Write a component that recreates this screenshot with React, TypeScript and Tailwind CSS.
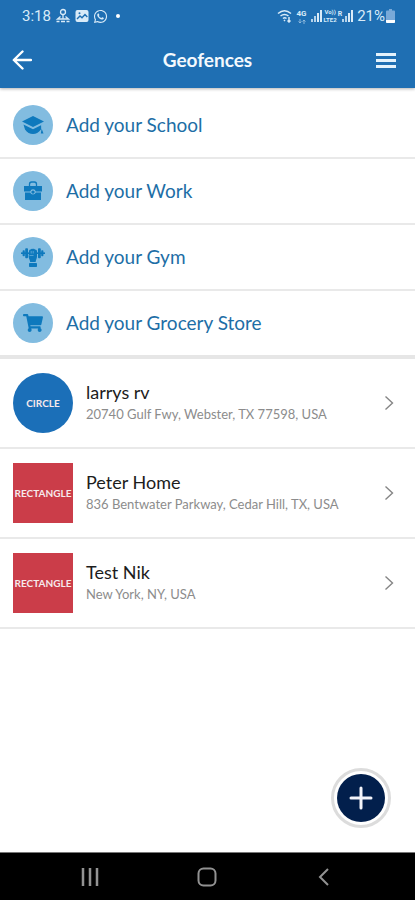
import type { ReactNode } from "react";
import { FaShoppingCart, FaWhatsapp } from "react-icons/fa";

const fontStack = "font-['Lato','Liberation_Sans',sans-serif]";

function SchoolIcon() {
  return (
    <svg viewBox="0 0 24 20" className="h-5 w-6" fill="#0e79bd" aria-hidden="true">
      <path d="M12 1 23 6.500 12 12 1 6.500z" />
      <path d="M2.500 9.500 12 14.200l8-4v4.300C17.500 17.500 15 19 12 19s-6-1.500-8-4.500z" />
      <path d="M20.800 8v6l1.700 4.500h-2.700l.8-4.500" />
    </svg>
  );
}

function WorkIcon() {
  return (
    <svg viewBox="0 0 20 20" className="size-5" fill="none" aria-hidden="true">
      <path d="M6.500 5V3.200C6.500 1.800 7.400 1 8.600 1h2.800c1.200 0 2.100.8 2.100 2.200V5" stroke="#0e79bd" strokeWidth="1.300" />
      <path d="M1 5h18v5.500h-6.200a2.900 2.900 0 0 0-5.600 0H1z" fill="#0e79bd" />
      <path d="M2 11.400h5.200a2.900 2.900 0 0 0 5.600 0H18V19H2z" fill="#0e79bd" />
      <circle cx="10" cy="11.100" r="1.700" fill="#0e79bd" />
    </svg>
  );
}

function GymIcon() {
  return (
    <svg viewBox="0 0 26 22" className="h-[22px] w-[26px]" fill="#0e79bd" aria-hidden="true">
      <rect x="1" y="6.400" width="24" height="1.600" />
      <rect x="2.600" y="4.200" width="2.200" height="6" rx="0.800" />
      <rect x="5.200" y="2.200" width="2.800" height="10" rx="0.900" />
      <rect x="18" y="2.200" width="2.800" height="10" rx="0.900" />
      <rect x="21.200" y="4.200" width="2.200" height="6" rx="0.800" />
      <path d="M9 5.200c0-1.200.7-1.700 1.700-1.700.5-.8 1.500-.9 2.200-.4.800-.5 1.700-.3 2.100.4 1.400 0 2 .8 2 2v5c0 2-1 3-1.400 5.500h-5.400C9.800 13.300 8.600 12.500 8.600 10.500z" />
      <path d="M11.200 5v2.500M13.200 5v2.500M9.500 9.500h4" stroke="#82bce0" strokeWidth="0.600" />
      <rect x="9" y="17" width="8" height="4" rx="0.700" />
    </svg>
  );
}

const shortcuts: { label: string; icon: ReactNode }[] = [
  { label: "Add your School", icon: <SchoolIcon /> },
  { label: "Add your Work", icon: <WorkIcon /> },
  { label: "Add your Gym", icon: <GymIcon /> },
  { label: "Add your Grocery Store", icon: <FaShoppingCart className="size-5" /> },
];

const fences: { name: string; address: string; shape: "CIRCLE" | "RECTANGLE" }[] = [
  { name: "larrys rv", address: "20740 Gulf Fwy, Webster, TX 77598, USA", shape: "CIRCLE" },
  { name: "Peter Home", address: "836 Bentwater Parkway, Cedar Hill, TX, USA", shape: "RECTANGLE" },
  { name: "Test Nik", address: "New York, NY, USA", shape: "RECTANGLE" },
];

function SignalBars() {
  return (
    <svg viewBox="0 0 12 12" className="size-3" fill="currentColor" aria-hidden="true">
      <rect x="0" y="9" width="2" height="3" opacity="0.800" />
      <rect x="3" y="6" width="2" height="6" opacity="0.800" />
      <rect x="6" y="3" width="2" height="9" />
      <rect x="9" y="0" width="2" height="12" />
    </svg>
  );
}

function StatusBar() {
  return (
    <div className="flex h-8 items-center justify-between pr-5 pl-[22px] font-['Roboto',sans-serif] text-[15px] leading-5 text-[#d9ebf8]">
      <div className="flex items-center gap-1">
        <span>3:18</span>
        <svg viewBox="0 0 16 16" className="size-4" fill="none" stroke="currentColor" strokeWidth="1.300" aria-hidden="true">
          <circle cx="8" cy="4" r="2.500" />
          <path d="M8 6.500V11M5.500 8.500 2.500 11h11l-3-2.500M1.500 13.500h3M6 13.500h4M11.500 13.500h3" />
        </svg>
        <svg viewBox="0 0 14 14" className="size-3.5" aria-hidden="true">
          <rect x="0.500" y="1" width="13" height="12" rx="2" fill="currentColor" />
          <path d="m2 10 3-3 2 1.800L10 5.500l2.300 2.500" fill="none" stroke="#1f6fb3" strokeWidth="1.400" />
          <circle cx="4.500" cy="4.300" r="1" fill="#1f6fb3" />
        </svg>
        <FaWhatsapp className="size-[15px]" aria-hidden="true" />
        <span className="ml-1 size-1 rounded-full bg-white" />
      </div>
      <div className="flex items-center gap-[3px]">
        <svg viewBox="0 0 16 14" className="h-3.5 w-4" fill="none" stroke="currentColor" strokeWidth="1.500" aria-hidden="true">
          <path d="M1 4.500c4-3.500 9-3.500 13 0M3.500 7c2.500-2 5.500-2 8 0M6 9.500c1-.8 2.500-.8 3.500 0M7 11l1 1M12 8v5M10.500 11.500 12 13l1.500-1.500" />
        </svg>
        <span className="flex w-3 flex-col items-center">
          <span className="text-[8px] leading-[10px] font-bold">4G</span>
          <svg viewBox="0 0 8 5" className="h-[5px] w-2" fill="none" stroke="currentColor" opacity="0.600" aria-hidden="true">
            <path d="M2 0v4M.5 2.500 2 4l1.500-1.500M6 5V1M4.500 2.500 6 1l1.500 1.500" />
          </svg>
        </span>
        <SignalBars />
        <span className="-ml-0.5 flex flex-col items-center text-[6px] leading-[8px] font-bold">
          <span>Vo))</span>
          <span>LTE2</span>
        </span>
        <span className="-ml-0.5 flex items-start">
          <span className="text-[7px] leading-2 font-bold">R</span>
          <SignalBars />
        </span>
        <span className="flex items-center gap-px">
          <span>21%</span>
          <svg viewBox="0 0 9 14" className="h-3.5 w-[9px]" aria-hidden="true">
            <path d="M3 0h3v1.500h2q1 0 1 1V13q0 1-1 1H1q-1 0-1-1V2.500q0-1 1-1h2z" fill="#79a9d8" />
            <path d="M0 11h9v2q0 1-1 1H1q-1 0-1-1z" fill="#fff" />
          </svg>
        </span>
      </div>
    </div>
  );
}

export default function App() {
  return (
    <div className={`flex min-h-screen flex-col bg-white ${fontStack}`}>
      <header className="bg-[#1f6fb3] shadow-[0_1px_3px_rgba(0,0,0,0.3)]">
        <StatusBar />
        <div className="grid h-14 grid-cols-[1fr_auto_1fr] items-center px-3">
          <button type="button" aria-label="Back" className="justify-self-start text-white">
            <svg viewBox="0 0 20 20" className="size-5" fill="none" stroke="currentColor" strokeWidth="2.400" strokeLinecap="round" strokeLinejoin="round">
              <path d="M10.500 1.500 1.800 10l8.700 8.500M2 10h17" />
            </svg>
          </button>
          <h1 className="text-[19px] leading-6 font-bold text-[#f4f9fd]">Geofences</h1>
          <button type="button" aria-label="Menu" className="mr-[7px] justify-self-end text-[#e4f2fc]">
            <svg viewBox="0 0 20 16" className="h-4 w-5" fill="currentColor">
              <path d="M0 1h20v3H0zM0 7h20v3H0zM0 13h20v3H0z" />
            </svg>
          </button>
        </div>
      </header>

      <main className="flex flex-1 flex-col">
        <ul className="divide-y-2 divide-[#e9e9e9] border-b-4 border-[#e6e6e6] pt-[5px]">
          {shortcuts.map((item) => (
            <li key={item.label}>
              <button type="button" className="flex w-full items-center gap-[13px] px-[13px] py-3 text-left">
                <span className="flex size-10 items-center justify-center rounded-full bg-[#82bce0] text-[#0e79bd]">{item.icon}</span>
                <span className="text-[19px] leading-6 text-[#1d6ea6]">{item.label}</span>
              </button>
            </li>
          ))}
        </ul>

        <ul className="divide-y-2 divide-[#e9e9e9] border-b-2 border-[#e9e9e9]">
          {fences.map((fence) => (
            <li key={fence.name}>
              <button type="button" className="flex w-full items-center gap-[13px] py-[14px] pr-[21px] pl-[13px] text-left">
                <span
                  className={`flex size-[60px] shrink-0 items-center justify-center text-[10px] leading-3 font-bold text-[#f6e9ec] ${
                    fence.shape === "CIRCLE" ? "rounded-full bg-[#1b6fb8]" : "bg-[#cb3d49]"
                  }`}
                >
                  {fence.shape}
                </span>
                <span className="min-w-0 flex-1 pb-[3px]">
                  <span className="block text-lg leading-6 text-[#1c1c1c]">{fence.name}</span>
                  <span className="block text-[13px] leading-5 text-[#8c8c8c]">{fence.address}</span>
                </span>
                <svg viewBox="0 0 10 16" className="h-4 w-2.5 shrink-0" fill="none" stroke="#858585" strokeWidth="1.400" aria-hidden="true">
                  <path d="m1.500 1.500 7 6.500-7 6.500" />
                </svg>
              </button>
            </li>
          ))}
        </ul>

        <div className="mt-auto flex justify-end pr-6 pb-6">
          <button
            type="button"
            aria-label="Add geofence"
            className="flex size-[60px] items-center justify-center rounded-full border-[3px] border-[#dcdcdc] bg-white"
          >
            <span className="flex size-12 items-center justify-center rounded-full bg-[#021f4c]">
              <svg viewBox="0 0 24 24" className="size-6" stroke="#f3f4fa" strokeWidth="3" strokeLinecap="round">
                <path d="M12 2v20M2 12h20" />
              </svg>
            </span>
          </button>
        </div>
      </main>

      <nav className="flex h-12 items-center justify-around border-t border-[#777] bg-black px-8 text-[#929292]">
        <button type="button" aria-label="Recent apps">
          <svg viewBox="0 0 18 18" className="size-[18px]" fill="none" stroke="currentColor" strokeWidth="2.500">
            <path d="M2 0v18M9 0v18M16 0v18" />
          </svg>
        </button>
        <button type="button" aria-label="Home">
          <svg viewBox="0 0 20 20" className="size-5" fill="none" stroke="currentColor" strokeWidth="2">
            <rect x="1.500" y="1.500" width="17" height="17" rx="5" />
          </svg>
        </button>
        <button type="button" aria-label="Back to previous screen">
          <svg viewBox="0 0 18 18" className="size-[18px]" fill="none" stroke="currentColor" strokeWidth="2">
            <path d="M12 1 4 9l8 8" />
          </svg>
        </button>
      </nav>
    </div>
  );
}
